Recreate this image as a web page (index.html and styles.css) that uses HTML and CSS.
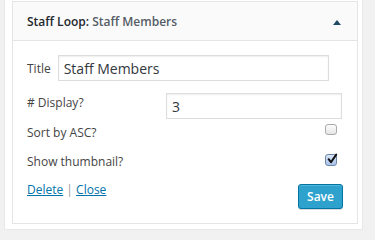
FILE: index.html
```html
<!DOCTYPE html>
<html>
<head>
<meta charset="utf-8">
<link rel="stylesheet" href="styles.css">
</head>
<body>
<div class="sidebar">
  <div class="widget">
    <div class="widget-top">
      <h3 class="widget-title">Staff Loop: <span class="in-title">Staff Members</span></h3>
      <span class="toggle"></span>
    </div>
    <div class="widget-inside">
      <div class="row row-title">
        <label class="lbl">Title</label>
        <input class="field field-title" type="text" value="Staff Members">
      </div>
      <div class="row row-display">
        <label class="lbl">#&nbsp;Display?</label>
        <input class="field field-display" type="text" value="3">
      </div>
      <div class="row row-sort">
        <label class="lbl">Sort by ASC?</label>
        <span class="cb"></span>
      </div>
      <div class="row row-thumb">
        <label class="lbl">Show thumbnail?</label>
        <span class="cb cb-checked">
          <svg viewBox="0 0 12 12" width="12" height="12"><path d="M2.6 6.2 L5 9.2 L10.2 1.6" fill="none" stroke="#111" stroke-width="2" stroke-linecap="round" stroke-linejoin="round"/></svg>
        </span>
      </div>
      <div class="controls">
        <div class="links"><a href="#">Delete</a> <span class="sep">|</span> <a href="#">Close</a></div>
        <button class="save">Save</button>
      </div>
    </div>
  </div>
</div>
</body>
</html>
```
FILE: styles.css
```css
html, body {
  margin: 0;
  padding: 0;
  background: #f1f1f1;
  font-family: "Open Sans", "Noto Sans", sans-serif;
  color: #444;
}
.sidebar {
  margin-left: 4px;
  width: 359px;
  height: 230px;
  background: #fff;
  border-left: 1px solid #e8e8e8;
  border-right: 1px solid #e8e8e8;
  border-bottom: 1px solid #e8e8e8;
  padding: 1px 0 0 7px;
  box-sizing: border-box;
}
.widget {
  width: 346px;
  height: 223px;
  box-sizing: border-box;
  border: 1px solid #e5e5e5;
  background: #fff;
}
.widget-top {
  height: 39px;
  box-sizing: border-box;
  background: #fafafa;
  border-bottom: 1px solid #e5e5e5;
  display: flex;
  align-items: center;
  padding: 0 16px 0 14px;
}
.widget-title {
  margin: 0;
  font-size: 12px;
  font-weight: 600;
  color: #23282d;
  flex: 1;
  line-height: 19px;
  padding-top: 1px;
}
.in-title {
  color: #555d66;
}
.toggle {
  width: 0;
  height: 0;
  border-left: 4px solid transparent;
  border-right: 4px solid transparent;
  border-bottom: 5px solid #1f4a63;
  margin-top: 2px;
}
.widget-inside {
  padding: 14px 15px 0 14px;
}
.row {
  display: flex;
  align-items: flex-start;
}
.lbl {
  font-size: 12px;
  line-height: 18px;
  color: #444;
}
.field {
  box-sizing: border-box;
  height: 26px;
  border: 1px solid #dddddd;
  box-shadow: inset 0 1px 2px rgba(0,0,0,0.07);
  font-family: "Open Sans", "Noto Sans", sans-serif;
  font-size: 14px;
  color: #32373c;
  padding: 0 5px;
  margin: 0;
  outline: none;
  background: #fff;
}
.row-title { height: 26px; }
.row-title .lbl { margin-top: 5px; }
.field-title { width: 271px; margin-left: 7px; }
.row-display { height: 26px; margin-top: 12px; }
.row-display .lbl { margin-top: 1px; }
.field-display { width: 176px; margin-left: auto; }
.row-sort { height: 20px; }
.row-sort .lbl { margin-top: 5px; }
.row-thumb { height: 30px; }
.row-thumb .lbl { margin-top: 14px; }
.cb {
  margin-left: auto;
  margin-right: 5px;
  width: 12px;
  height: 11px;
  box-sizing: border-box;
  border: 1px solid #aaa;
  border-radius: 3px;
  background: linear-gradient(#fdfdfd, #e6e6e6);
  position: relative;
}
.row-sort .cb { margin-top: 5px; }
.row-thumb .cb {
  margin-top: 15px;
  height: 12px;
  border-color: #6d86a6;
  background: linear-gradient(#d9e6f8, #a9c3ea);
}
.cb svg {
  position: absolute;
  left: 0;
  top: -2px;
}
.controls {
  display: flex;
  justify-content: space-between;
  align-items: flex-start;
  margin-top: 12px;
}
.links {
  font-size: 12px;
  line-height: 18px;
  color: #999;
}
.links a {
  color: #0073aa;
  text-decoration: underline;
}
.sep { color: #999; }
.save {
  margin-top: 3px;
  margin-right: -1px;
  width: 45px;
  height: 25px;
  box-sizing: border-box;
  background: #2ea2cc;
  border: 1px solid #0074a2;
  border-radius: 3px;
  box-shadow: inset 0 1px 0 rgba(120,200,230,0.5), 0 1px 0 rgba(0,0,0,0.15);
  color: #fff;
  font-family: "Open Sans", "Noto Sans", sans-serif;
  font-size: 12px;
  font-weight: 600;
  padding: 0;
  line-height: 23px;
}
```
